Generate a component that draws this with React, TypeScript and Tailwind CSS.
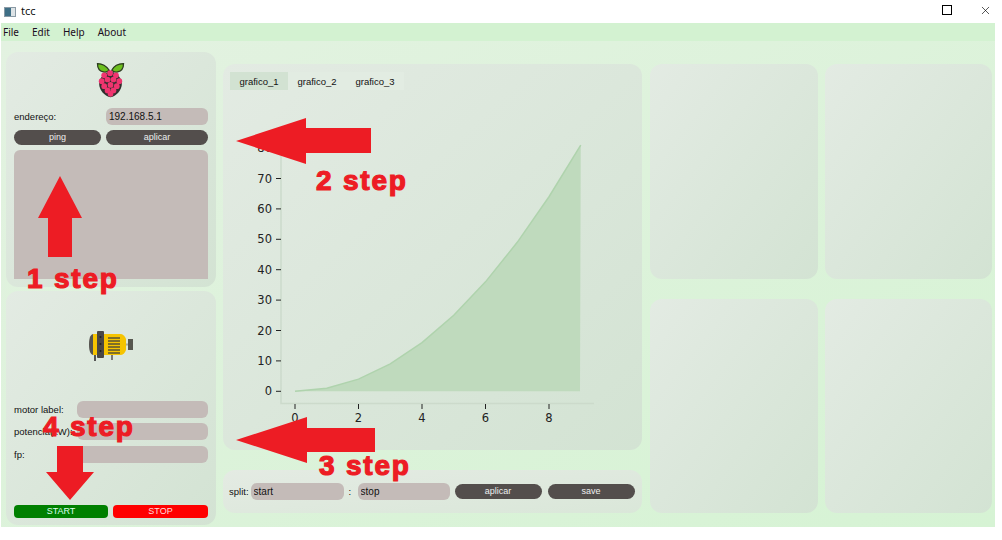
import { X } from 'lucide-react'

const panel = 'rounded-xl bg-gradient-to-br from-[#e3ebe3] to-[#d3e3d3]'
const label = "font-['Liberation_Sans',sans-serif] text-[9.500px] whitespace-nowrap text-[#111]"
const field = "h-[17px] rounded-md bg-[#c4bbb8] px-[3px] font-['Liberation_Sans',sans-serif] text-[10px] text-[#111] outline-none"
const darkButton = "h-[15px] rounded-lg bg-[#534e4c] font-['Liberation_Sans',sans-serif] text-[9px] leading-[15px] text-[#eee]"

function RaspberryLogo() {
  const berries = [
    [10, 17], [17, 14.5], [24, 17], [7, 24], [14, 22], [21, 22], [28, 24],
    [10, 30], [17.5, 28.5], [25, 30], [14, 35], [21, 35], [17.5, 39],
  ]
  return (
    <svg width="35" height="37" viewBox="0 0 35 44">
      <path d="M17 12C10 15 4 20 4 27c0 8 7 15 13.500 16C24 42 31 35 31 27c0-7-6-12-13-15z" fill="#32302f" />
      <path d="M16 11C12 5 7 3 2 3c0 5 2 9 7 10 3 1 5 0 7-2z" fill="#6cbf1e" stroke="#2c3a20" strokeWidth="1.500" />
      <path d="M19 11C22 5 27 3 33 3c0 5-2 9-7 10-3 1-5 0-7-2z" fill="#6cbf1e" stroke="#2c3a20" strokeWidth="1.500" />
      {berries.map(([cx, cy], i) => (
        <circle key={i} cx={cx} cy={cy} r="3.400" fill="#f0346f" />
      ))}
    </svg>
  )
}

function MotorIcon() {
  return (
    <svg width="45" height="30" viewBox="0 0 45 30">
      <path d="M5 3h27c3 0 5 2 6 5v11c-1 3-3 5-6 5H5z" fill="#f6c400" />
      <path d="M5 3C2 4 1 8 1 13.500S2 23 5 24z" fill="#55534f" />
      <rect x="9" y="0" width="7" height="27" rx="1" fill="#4a4745" />
      <circle cx="12.500" cy="6" r="1" fill="#222" />
      <circle cx="12.500" cy="13" r="1" fill="#222" />
      <circle cx="12.500" cy="20" r="1" fill="#222" />
      <path d="M20 7h12M20 10h12M20 13h12M20 16h12M20 19h12M20 22h12" stroke="#5a5335" strokeWidth="1.500" />
      <rect x="38" y="12.500" width="3" height="2" fill="#a9a99a" />
      <rect x="40" y="8" width="5" height="11" fill="#57574f" />
      <rect x="6" y="24" width="2" height="6" fill="#555" />
      <rect x="23" y="24" width="2" height="5" fill="#777" />
    </svg>
  )
}

function Chart() {
  const yTicks = [0, 10, 20, 30, 40, 50, 60, 70, 80]
  const xTicks = [0, 2, 4, 6, 8]
  const px = (v: number) => 295 + v * 31.75
  const py = (v: number) => 391.3 - v * 3.04
  const curve = Array.from({ length: 10 }, (_, i) => `${px(i)},${py(i * i)}`).join(' ')
  return (
    <svg className="block" width="419" height="340" viewBox="223 90 419 340">
      <polygon points={`295,391.3 ${curve} 580,391.3`} fill="#bfdabd" />
      <polyline points={curve} fill="none" stroke="#afd3ad" strokeWidth="1.500" />
      <path d="M281 133V403.500H594" fill="none" stroke="#ccdacb" strokeWidth="1.500" />
      {yTicks.map((t) => (
        <g key={t}>
          <line x1="276" x2="281" y1={py(t)} y2={py(t)} stroke="#222" />
          <text x="272" y={py(t) + 4} textAnchor="end" fontSize="11.500" fill="#222" fontFamily="'DejaVu Sans', sans-serif">
            {t}
          </text>
        </g>
      ))}
      {xTicks.map((t) => (
        <g key={t}>
          <line x1={px(t)} x2={px(t)} y1="404" y2="409" stroke="#222" />
          <text x={px(t)} y="422" textAnchor="middle" fontSize="11.500" fill="#222" fontFamily="'DejaVu Sans', sans-serif">
            {t}
          </text>
        </g>
      ))}
    </svg>
  )
}

function StepLabel({ text, className }: { text: string; className: string }) {
  return (
    <span className={`absolute whitespace-nowrap font-['Liberation_Sans',sans-serif] text-[28px] leading-none font-bold tracking-[1.800px] text-[#ed1c24] [-webkit-text-stroke:1.200px_#ed1c24] ${className}`}>
      {text}
    </span>
  )
}

export default function App() {
  return (
    <div className="relative h-[540px] w-[1002px] overflow-hidden bg-white font-['Noto_Sans',sans-serif] text-[#111]">
      <header className="flex h-[23px] items-center pr-[10px] pl-[4px]">
        <div className="flex h-[10px] w-[12px] border border-[#8a9aa5] bg-[#dde3e6]">
          <div className="h-full w-[6px] bg-[#3f6f86]" />
        </div>
        <span className="ml-[5px] text-[11px]">tcc</span>
        <div className="mb-[3px] ml-auto h-[10px] w-[10px] border border-black" />
        <X size={13} strokeWidth={1.200} className="mb-[3px] ml-[27px] text-black" />
      </header>

      <div className="ml-[1px] w-[994px]">
        <nav className="flex h-[18px] items-center gap-[13px] bg-[#d3f2d1] pl-[2px] text-[10px] text-[#1a0b20]">
          <span>File</span>
          <span>Edit</span>
          <span>Help</span>
          <span>About</span>
        </nav>

        <main className="flex h-[486px] bg-gradient-to-br from-[#e3f2e1] to-[#d6f3d4] pl-[5px]">
          <div className="mt-[11px] flex w-[210px] flex-col gap-[4px]">
            <section className={`h-[235px] ${panel} px-[8px] pt-[9px]`}>
              <div className="flex h-[47px] justify-center pr-[2px]">
                <RaspberryLogo />
              </div>
              <div className="flex items-center justify-between">
                <span className={`${label} pt-[2px]`}>endereço:</span>
                <input readOnly value="192.168.5.1" className={`w-[102px] ${field}`} />
              </div>
              <div className="mt-[5px] flex gap-[5px]">
                <button className={`w-[87px] ${darkButton}`}>ping</button>
                <button className={`w-[102px] ${darkButton}`}>aplicar</button>
              </div>
              <div className="mt-[5px] h-[129px] rounded-t-md bg-[#c4bbb8]" />
            </section>

            <section className={`flex h-[234px] flex-col ${panel} px-[8px] pb-[7px]`}>
              <div className="mt-[40px] flex h-[30px] justify-center pr-[1px]">
                <MotorIcon />
              </div>
              <div className="mt-[40px] flex flex-col gap-[5px]">
                {['motor label:', 'potencia(kW):', 'fp:'].map((text, i) => (
                  <div key={text} className={`flex items-center justify-between ${i === 2 ? 'mt-[1px]' : ''}`}>
                    <span className={`${label} pt-[2px]`}>{text}</span>
                    <div className={`w-[131px] ${field}`} />
                  </div>
                ))}
              </div>
              <div className="mt-auto flex gap-[5px]">
                <button className="h-[13px] w-[94px] rounded-sm bg-[#008000] font-['Liberation_Sans',sans-serif] text-[9px] leading-[13px] text-[#dfe]">START</button>
                <button className="h-[13px] w-[95px] rounded-sm bg-[#ff0000] font-['Liberation_Sans',sans-serif] text-[9px] leading-[13px] text-[#fdd]">STOP</button>
              </div>
            </section>
          </div>

          <div className="mt-[23px] ml-[7px] flex w-[419px] flex-col gap-[20px]">
            <section className={`h-[386px] ${panel}`}>
              <div className="ml-[7px] flex h-[26px] pt-[8px]">
                <div className={`flex bg-[#e2ece2] ${label}`}>
                  <span className="flex h-[18px] w-[58px] items-center justify-center bg-[#d2e2d2] pt-[3px]">grafico_1</span>
                  <span className="flex h-[18px] w-[58px] items-center justify-center pt-[3px]">grafico_2</span>
                  <span className="flex h-[18px] w-[58px] items-center justify-center pt-[3px]">grafico_3</span>
                </div>
              </div>
              <Chart />
            </section>

            <section className="flex h-[43px] items-center rounded-xl bg-gradient-to-br from-[#e4ebe3] to-[#dae7d9] pr-[7px] pl-[6px]">
              <span className={`${label} pt-[2px]`}>split:</span>
              <input readOnly value="start" className={`ml-[2px] w-[93px] ${field}`} />
              <span className={`${label} mx-[5px] w-[4px] pt-[2px]`}>:</span>
              <input readOnly value="stop" className={`w-[92px] ${field}`} />
              <button className={`ml-[5px] w-[87px] ${darkButton}`}>aplicar</button>
              <button className={`ml-[6px] w-[87px] ${darkButton}`}>save</button>
            </section>
          </div>

          <div className="mt-[23px] ml-[8px] grid h-[449px] w-[342px] grid-cols-2 grid-rows-2 gap-x-[7px] gap-y-[20px]">
            <div className={panel} />
            <div className={panel} />
            <div className={panel} />
            <div className={panel} />
          </div>
        </main>
      </div>

      {/* tutorial overlay */}
      <svg className="absolute top-0 left-0" width="1002" height="540" fill="#ed1c24">
        <polygon points="60,176 82,218 72,218 72,257 48,257 48,218 38,218" />
        <polygon points="236,141 306,118 306,128 371,128 371,153 306,153 306,164" />
        <polygon points="236,440 307,417 307,428 375,428 375,452 307,452 307,463" />
        <polygon points="70,500 46,472 57,472 57,446 83,446 83,472 94,472" />
      </svg>
      <StepLabel text="1 step" className="top-[265px] left-[27px]" />
      <StepLabel text="2 step" className="top-[167px] left-[316px]" />
      <StepLabel text="3 step" className="top-[452px] left-[319px]" />
      <StepLabel text="4 step" className="top-[413px] left-[43px]" />
    </div>
  )
}
